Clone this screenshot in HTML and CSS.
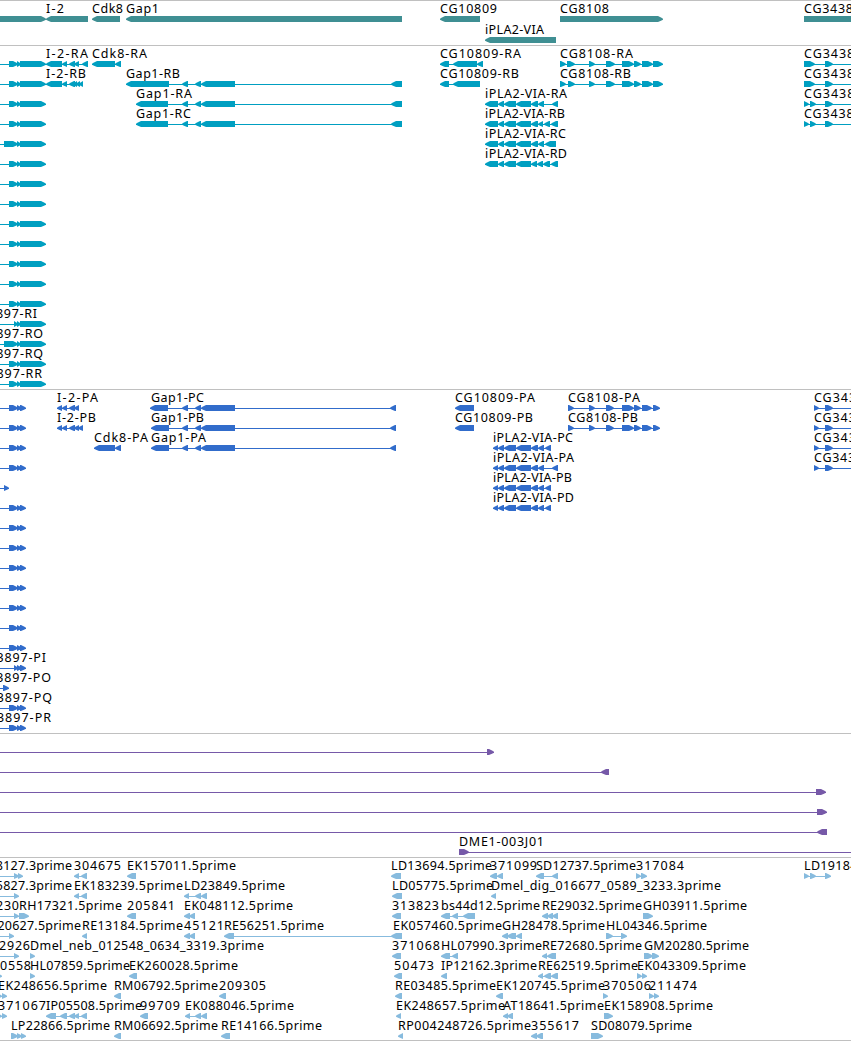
FILE: index.html
```
<!DOCTYPE html>
<html lang="en">

<head>
    <meta charset="UTF-8">
    <meta name="viewport" content="width=device-width, initial-scale=1.0">
    <title>Genome tracks</title>
    <link rel="stylesheet" href="styles.css">
</head>

<body>
    <div class="browser">
        <div class="track gene"></div>
        <div class="track transcript"></div>
        <div class="track cds"></div>
        <div class="track clone"></div>
        <div class="track est"></div>
    </div>
    <script src="tracks.js"></script>
</body>

</html>
```
FILE: styles.css
```
* {
    box-sizing: border-box;
}

body {
    margin: 0;
    background-color: #fff;
    overflow: hidden;
}

.browser {
    width: 851px;
    border-bottom: 1px solid #c0c0c0;
}

.track {
    border-top: 1px solid #c0c0c0;
    padding-bottom: 3px;
}

.row {
    display: block;
    width: 851px;
    height: 20px;
    overflow: visible;
}

.row text {
    font-family: "Noto Sans", "Open Sans", sans-serif;
    font-size: 12.5px;
    fill: #000;
}

.gene {
    color: #3f8f93;
    padding-bottom: 2px;
}

.gene .row {
    height: 21px;
}

.transcript {
    color: #009fc1;
}

.cds {
    color: #316ccb;
}

.clone {
    color: #7659a8;
}

.est {
    color: #87bbde;
    padding-bottom: 2px;
}

.exon,
.intron {
    fill: currentColor;
}

.intron {
    shape-rendering: crispEdges;
}
```
FILE: tracks.js
```
// one feature: [label, label x, label width, strand, exons]
// exons are 'start:end' pairs, a first exon below 0 runs off the left edge

const OFF = '-20:-10 ';

const genes = [
    [
        ['', 0, 0, '+', '-20:46'],
        ['I-2', 46, 18, '-', '46:88'],
        ['Cdk8', 92, 31, '-', '92:120'],
        ['Gap1', 126, 33, '-', '126:402'],
        ['CG10809', 440, 57, '-', '440:480'],
        ['CG8108', 560, 49, '+', '560:663'],
        ['CG3438', 804, 49, '+', '804:900'],
    ],
    [['iPLA2-VIA', 485, 59, '-', '485:556']],
];

const gap = ' 182:188 195:201 201:235 391:402';
const ipla = '485:498 498:504 504:516 516:531 ';
const transcripts = [
    [
        ['I-2-RA', 46, 42, '-', '46:62 62:67 69:75 74:79 82:88'],
        ['Cdk8-RA', 92, 55, '-', '92:115 115:121'],
        ['CG10809-RA', 440, 81, '-', '440:449 453:477 477:483'],
        ['CG8108-RA', 560, 73, '+', '560:566 567:575 589:595 606:615 622:634 634:641 642:653 653:663'],
        ['CG3438-RA', 804, 73, '+', '804:815 825:833 870:880'],
    ],
    [
        ['I-2-RB', 46, 40, '-', '46:62 62:67 69:75 73:77 76:80 79:83'],
        ['Gap1-RB', 126, 54, '-', '126:169' + gap],
        ['CG10809-RB', 440, 79, '-', '440:449 453:480'],
        ['CG8108-RB', 560, 71, '+', '560:566 568:575 589:595 606:615 622:634 634:641 642:653 653:663'],
        ['CG3438-RB', 804, 73, '+', '804:815 825:833 870:880'],
    ],
    [
        ['Gap1-RA', 136, 56, '-', '136:168' + gap],
        ['iPLA2-VIA-RA', 485, 82, '-', ipla + '531:538 538:544 552:558'],
        ['CG3438-RC', 804, 73, '+', '804:809 810:816 825:833 870:880'],
    ],
    [
        ['Gap1-RC', 136, 55, '-', '136:168' + gap],
        ['iPLA2-VIA-RB', 485, 80, '-', ipla + '531:538 538:543 544:550 551:558'],
        ['CG3438-RD', 804, 73, '+', '804:809 810:816 825:833 870:880'],
    ],
    [['iPLA2-VIA-RC', 485, 81, '-', ipla + '531:538 538:544 545:556']],
    [['iPLA2-VIA-RD', 485, 82, '-', ipla + '531:537 537:543 543:550 551:558']],
    [], [], [], [], [], [], [], [], [], [], [],
];

// CG33897 isoforms, only the last four have their name in view
const rNames = { 13: ['CG33897-RI', 75], 14: ['CG33897-RO', 81], 15: ['CG33897-RQ', 81], 16: ['CG33897-RR', 80] };
const rStart = { 4: 4, 13: 14, 14: 4 };
transcripts.forEach((row, i) => {
    const name = rNames[i] || ['', 0];
    const start = rStart[i] || 9;
    row.unshift([name[0], -38, name[1], '+', `${OFF}${start}:18 17:21 20:46`]);
});

const gapP = ' 182:188 195:201 201:235 390:396';
const iplaP = '493:498 498:504 504:516 516:531 531:538 538:544 ';
const cgP = '568:574 589:595 606:614 622:634 634:641 642:652 653:660';
const cgP2 = '814:819 825:833 870:880';
const cds = [
    [
        ['I-2-PA', 57, 41, '-', '57:62 62:67 69:75 74:79'],
        ['Gap1-PC', 151, 53, '-', '150:168' + gapP],
        ['CG10809-PA', 455, 80, '-', '455:474'],
        ['CG8108-PA', 568, 72, '+', cgP],
        ['CG3438-PA', 814, 72, '+', cgP2],
    ],
    [
        ['I-2-PB', 57, 39, '-', '57:62 62:67 69:75 74:79 78:83'],
        ['Gap1-PB', 151, 53, '-', '151:169' + gapP],
        ['CG10809-PB', 455, 78, '-', '455:474'],
        ['CG8108-PB', 568, 70, '+', cgP],
        ['CG3438-PB', 814, 72, '+', cgP2],
    ],
    [
        ['Cdk8-PA', 94, 54, '-', '94:115 115:121'],
        ['Gap1-PA', 151, 55, '-', '151:169' + gapP],
        ['iPLA2-VIA-PC', 493, 80, '-', iplaP + '545:551'],
        ['CG3438-PC', 814, 72, '+', cgP2],
    ],
    [
        ['iPLA2-VIA-PA', 493, 81, '-', iplaP + '552:558'],
        ['CG3438-PD', 814, 72, '+', cgP2],
    ],
    [['iPLA2-VIA-PB', 493, 79, '-', iplaP + '545:551']],
    [['iPLA2-VIA-PD', 493, 81, '-', iplaP + '545:551']],
    [], [], [], [], [], [], [], [], [], [], [],
];

const pNames = { 13: ['CG33897-PI', 76], 14: ['CG33897-PO', 81], 15: ['CG33897-PQ', 82], 16: ['CG33897-PR', 81] };
const pExons = { 4: '4:9', 13: '14:18 17:22 20:26', 14: '3:9' };
cds.forEach((row, i) => {
    const name = pNames[i] || ['', 0];
    row.unshift([name[0], -30, name[1], '+', OFF + (pExons[i] || '9:18 17:22 20:26')]);
});

const clones = [
    [['', 0, 0, '+', OFF + '487:494']],
    [['', 0, 0, '-', OFF + '601:609']],
    [['', 0, 0, '+', OFF + '816:826']],
    [['', 0, 0, '+', OFF + '817:827']],
    [['', 0, 0, '-', OFF + '817:827']],
    [['DME1-003J01', 459, 85, '+', '459:469 870:880']],
];

const ests = [
    [
        ['SD18127.3prime', -28, 100, '+', OFF + '14:19 18:23'],
        ['304675', 74, 47, '-', '74:79 81:87'],
        ['EK157011.5prime', 127, 109, '-', '127:136'],
        ['LD13694.5prime', 391, 101, '-', '391:401'],
        ['371099', 490, 47, '-', '490:497 497:503'],
        ['SD12737.5prime', 536, 100, '-', '536:544 552:558'],
        ['317084', 636, 48, '+', '636:641 641:647'],
        ['LD19184.5prime', 804, 101, '+', '804:809 810:816 825:831'],
    ],
    [
        ['SD15827.3prime', -28, 100, '+', OFF + '14:19'],
        ['EK183239.5prime', 74, 109, '-', '74:79 81:87'],
        ['LD23849.5prime', 184, 101, '-', '184:189 195:201 201:207'],
        ['LD05775.5prime', 392, 101, '-', '392:402'],
        ['Dmel_dig_016677_0589_3233.3prime', 491, 230, '-', '491:496'],
    ],
    [
        ['317230', -28, 47, '+', OFF + '14:19'],
        ['RH17321.5prime', 19, 103, '+', '19:29'],
        ['205841', 127, 48, '-', '127:136'],
        ['EK048112.5prime', 184, 109, '-', '184:190 189:195'],
        ['313823', 392, 47, '-', '392:401'],
        ['bs44d12.5prime', 441, 99, '-', '441:450 452:458 463:475'],
        ['RE29032.5prime', 542, 100, '-', '542:548 547:553 552:558'],
        ['GH03911.5prime', 643, 104, '+', '643:653'],
    ],
    [
        ['SD20627.5prime', -19, 100, '+', OFF + '9:14'],
        ['RE13184.5prime', 82, 101, '-', '82:87'],
        ['45121', 184, 40, '-', '184:190 189:195'],
        ['RE56251.5prime', 224, 100, '-', '224:234 391:402'],
        ['EK057460.5prime', 393, 109, '-', '393:402'],
        ['GH28478.5prime', 502, 103, '-', '502:508 507:516 516:522'],
        ['HL04346.5prime', 606, 101, '+', '606:613 621:627'],
    ],
    [
        ['312926', -17, 47, '+', OFF + '14:19'],
        ['Dmel_neb_012548_0634_3319.3prime', 30, 234, '+', '30:35'],
        ['371068', 392, 48, '-', '392:401'],
        ['HL07990.3prime', 441, 101, '-', '441:450 452:458'],
        ['RE72680.5prime', 542, 100, '-', '542:547 547:556'],
        ['GM20280.5prime', 644, 105, '+', '644:653 652:659'],
    ],
    [
        ['310558', -16, 47, '+', '-20:2'],
        ['HL07859.5prime', 30, 100, '+', '30:35'],
        ['EK260028.5prime', 129, 109, '-', '129:137'],
        ['50473', 394, 40, '-', '394:402'],
        ['IP12162.3prime', 441, 96, '-', '441:447'],
        ['RE62519.5prime', 538, 100, '-', '538:543 544:551 551:558'],
        ['EK043309.5prime', 637, 109, '+', '637:642 642:647'],
    ],
    [
        ['EK248656.5prime', -2, 109, '+', '-4:2 2:7'],
        ['RM06792.5prime', 114, 104, '-', '114:121'],
        ['209305', 219, 47, '-', '219:226'],
        ['RE03485.5prime', 395, 101, '-', '395:402'],
        ['EK120745.5prime', 496, 109, '-', '496:503'],
        ['370506', 603, 48, '+', '603:608'],
        ['211474', 649, 48, '+', '649:654 654:659'],
    ],
    [
        ['371067', -2, 48, '+', '-4:2 2:7'],
        ['IP05508.5prime', 46, 96, '-', '46:56 60:67 69:75 74:79 81:87'],
        ['99709', 140, 40, '-', '140:148'],
        ['EK088046.5prime', 185, 109, '-', '185:190 195:201 201:207'],
        ['EK248657.5prime', 396, 109, '-', '396:401'],
        ['AT18641.5prime', 503, 101, '-', '503:508 507:513'],
        ['EK158908.5prime', 604, 109, '+', '604:613'],
    ],
    [
        ['LP22866.5prime', 11, 99, '+', '11:18 17:22 21:26'],
        ['RM06692.5prime', 114, 104, '-', '114:121'],
        ['RE14166.5prime', 221, 101, '-', '221:230'],
        ['RP004248726.5prime', 398, 133, '-', '398:403'],
        ['355617', 531, 48, '-', '531:537 536:543'],
        ['SD08079.5prime', 591, 101, '+', '591:603'],
    ],
];

// exon box with a pointed end in the reading direction
function exonShape(start, end, strand) {
    const tip = Math.min(5, end - start);
    const from = strand === '+' ? start : end;
    const to = strand === '+' ? end : start;
    const d = strand === '+' ? -1 : 1;
    const neck = to + d * tip;
    const mid = to + d * tip * 0.4;
    return `<polygon class="exon" points="${from},15 ${neck},15 ${mid},16.5 ${to},17.7 ${to},18.7 ${mid},19.7 ${neck},21 ${from},21"/>`;
}

function drawFeature([label, x, width, strand, exonText]) {
    const exons = exonText.split(' ').map(pair => pair.split(':').map(Number));
    const first = exons[0][0];
    const last = exons[exons.length - 1][1];
    let out = '';
    if (exons.length > 1) {
        out += `<rect class="intron" x="${first}" y="18" width="${last - first}" height="1"/>`;
    }
    out += exons.map(([a, b]) => exonShape(a, b, strand)).join('');
    if (label) {
        out += `<text x="${x}" y="12" textLength="${width}">${label}</text>`;
    }
    return out;
}

function drawTrack(name, rows) {
    document.querySelector('.' + name).innerHTML = rows
        .map(row => `<svg class="row">${row.map(drawFeature).join('')}</svg>`)
        .join('');
}

drawTrack('gene', genes);
drawTrack('transcript', transcripts);
drawTrack('cds', cds);
drawTrack('clone', clones);
drawTrack('est', ests);
```
